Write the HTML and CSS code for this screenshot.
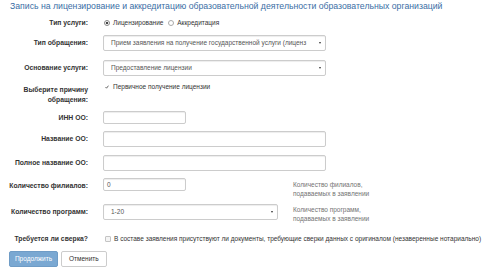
FILE: index.html
```html
<!DOCTYPE html>
<html lang="ru">
<head>
	<meta charset="UTF-8">
	<title>Запись на лицензирование</title>
	<link rel="stylesheet" href="styles.css">
</head>
<body>
	<h4 class="title">Запись на лицензирование и аккредитацию образовательной деятельности образовательных организаций</h4>
	<form class="form">
		<div class="row row_radio">
			<div class="lbl">Тип услуги:</div>
			<div class="ctrl">
				<label class="opt"><span class="radio radio_on"></span>Лицензирование</label>
				<label class="opt"><span class="radio"></span>Аккредитация</label>
			</div>
		</div>
		<div class="row row_sel1">
			<div class="lbl">Тип обращения:</div>
			<div class="ctrl wide">
				<div class="select">
					<span class="select_text">Прием заявления на получение государственной услуги (лиценз</span>
					<span class="arrow"></span>
				</div>
			</div>
		</div>
		<div class="row row_sel2">
			<div class="lbl">Основание услуги:</div>
			<div class="ctrl wide">
				<div class="select">
					<span class="select_text">Предоставление лицензии</span>
					<span class="arrow"></span>
				</div>
			</div>
		</div>
		<div class="row row_reason">
			<div class="lbl lbl_two">Выберите причину обращения:</div>
			<div class="ctrl">
				<label class="opt opt_check">
					<span class="check check_on"><svg width="6" height="6" viewBox="0 0 6 6"><path d="M0.8 3.2 L2.3 4.8 L5.2 1" fill="none" stroke="#333" stroke-width="1.1"/></svg></span>Первичное получение лицензии
				</label>
			</div>
		</div>
		<div class="row row_inn">
			<div class="lbl">ИНН ОО:</div>
			<div class="ctrl">
				<div class="input input_short"></div>
			</div>
		</div>
		<div class="row row_name">
			<div class="lbl">Название ОО:</div>
			<div class="ctrl wide">
				<div class="input"></div>
			</div>
		</div>
		<div class="row row_full">
			<div class="lbl">Полное название ОО:</div>
			<div class="ctrl wide">
				<div class="input"></div>
			</div>
		</div>
		<div class="row row_top row_fil">
			<div class="lbl lbl_pad">Количество филиалов:</div>
			<div class="ctrl mid">
				<div class="input input_short">0</div>
			</div>
			<div class="help help_fil">Количество филиалов,<br>подаваемых в заявлении</div>
		</div>
		<div class="row row_top row_prog">
			<div class="lbl lbl_pad">Количество программ:</div>
			<div class="ctrl mid">
				<div class="select">
					<span class="select_text">1-20</span>
					<span class="arrow"></span>
				</div>
			</div>
			<div class="help">Количество программ,<br>подаваемых в заявлении</div>
		</div>
		<div class="row row_check">
			<div class="lbl">Требуется ли сверка?</div>
			<div class="ctrl">
				<label class="opt"><span class="check"></span>В составе заявления присутствуют ли документы, требующие сверки данных с оригиналом (незаверенные нотариально)</label>
			</div>
		</div>
		<div class="buttons">
			<span class="btn btn_primary">Продолжить</span>
			<span class="btn">Отменить</span>
		</div>
	</form>
</body>
</html>
```

FILE: styles.css
```css
body {
	margin: 0;
	font-family: "Liberation Sans", Arial, sans-serif;
	font-size: 6.5px;
	color: #333;
	background: #fff;
}
.title {
	margin: 0;
	padding: 1px 0 0 10px;
	height: 12px;
	font-size: 8.7px;
	line-height: 11px;
	font-weight: normal;
	color: #3a6ea5;
	white-space: nowrap;
}
.form {
	margin: 0;
}
.row {
	display: flex;
	align-items: center;
}
.row_top {
	align-items: flex-start;
}
.lbl {
	flex: none;
	width: 88px;
	text-align: right;
	font-weight: bold;
	font-size: 6.8px;
	line-height: 10px;
	margin-right: 15px;
}
.lbl_two {
	padding-top: 3px;
	align-self: flex-start;
}
.lbl_pad {
	padding-top: 3px;
}
.ctrl {
	flex: none;
	line-height: 10px;
}
.wide {
	width: 223px;
}
.mid {
	width: 175px;
}

.row_radio { margin-top: 5px; height: 10px; }
.row_sel1 { margin-top: 7px; }
.row_sel2 { margin-top: 9px; }
.row_reason { margin-top: 6px; height: 23px; align-items: flex-start; }
.row_inn { margin-top: 6px; }
.row_name { margin-top: 7px; }
.row_full { margin-top: 8px; }
.row_fil { margin-top: 7px; }
.row_prog { margin-top: 6px; }
.row_check { margin-top: 11px; height: 10px; }

.opt {
	display: inline-flex;
	align-items: center;
	margin-right: 2px;
}
.radio {
	display: inline-block;
	box-sizing: border-box;
	width: 6px;
	height: 6px;
	margin: 0 3px 0 1px;
	border: 1px solid #aaa;
	border-radius: 50%;
	background: #fff;
}
.radio_on {
	border-color: #888;
	background: radial-gradient(circle, #444 0 1.3px, #fff 1.6px);
}
.check {
	display: inline-flex;
	align-items: center;
	justify-content: center;
	box-sizing: border-box;
	width: 6px;
	height: 6px;
	margin: 0 3px 0 2px;
	border: 1px solid #c4c4c4;
	border-radius: 1px;
	background: #f4f4f4;
}
.check_on {
	border-color: transparent;
	background: none;
	margin-left: 1px;
}
.input,
.select {
	box-sizing: border-box;
	height: 16px;
	border: 1px solid #ccc;
	border-radius: 2px;
	background: #fff;
	box-shadow: inset 0 1px 1px rgba(0, 0, 0, .075);
	color: #555;
	line-height: 14px;
	padding: 0 3px;
}
.input_short {
	width: 83px;
	height: 13px;
	line-height: 11px;
}
.select {
	display: flex;
	align-items: center;
	padding: 0 4px 0 7px;
}
.select_text {
	flex: 1;
	overflow: hidden;
	white-space: nowrap;
}
.arrow {
	flex: none;
	width: 0;
	height: 0;
	margin-left: 6px;
	border-left: 1.5px solid transparent;
	border-right: 1.5px solid transparent;
	border-top: 2.5px solid #333;
}
.help {
	margin-left: 15px;
	line-height: 9px;
	color: #737373;
	margin-top: 1px;
}
.help_fil {
	margin-top: 2px;
}
.buttons {
	display: flex;
	gap: 3px;
	margin-top: 7px;
	padding-left: 9px;
}
.btn {
	box-sizing: border-box;
	height: 16px;
	line-height: 14px;
	padding: 0 7px;
	border: 1px solid #ccc;
	border-radius: 2px;
	background: #fff;
	color: #333;
}
.btn_primary {
	width: 49px;
	padding: 0;
	text-align: center;
	background: #7aa8d2;
	border-color: #6f9cc6;
	color: #fff;
}
```
